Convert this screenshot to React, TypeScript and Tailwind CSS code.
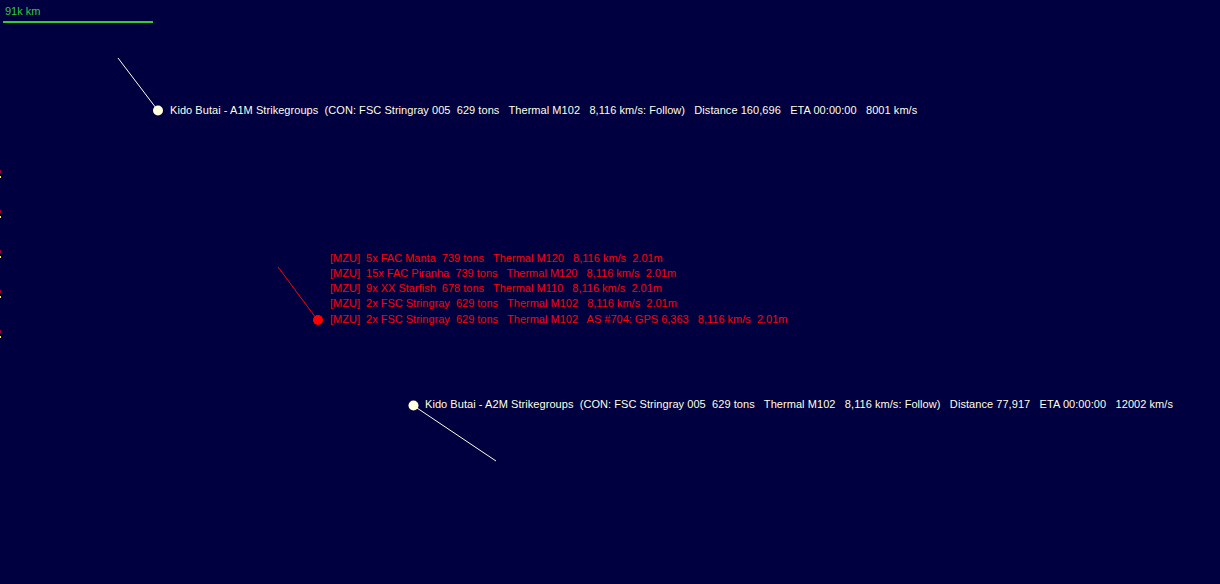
const font = "font-['Liberation_Sans',Arial,sans-serif] text-[11px] leading-[13px] whitespace-pre";

const contacts = [
  '[MZU]  5x FAC Manta  739 tons   Thermal M120   8,116 km/s  2.01m',
  '[MZU]  15x FAC Piranha  739 tons   Thermal M120   8,116 km/s  2.01m',
  '[MZU]  9x XX Starfish  678 tons   Thermal M110   8,116 km/s  2.01m',
  '[MZU]  2x FSC Stringray  629 tons   Thermal M102   8,116 km/s  2.01m',
  '[MZU]  2x FSC Stringray  629 tons   Thermal M102   AS #704: GPS 6,363   8,116 km/s  2.01m',
];

const ticks = [170, 210, 250, 290, 330];

export default function App() {
  return (
    <div className="relative h-[584px] w-[1220px] overflow-hidden bg-[#000040]">
      <svg className="absolute inset-0" width="1220" height="584">
        <line x1="3" y1="22" x2="153" y2="22" stroke="#32cd32" strokeWidth="2" />
        <line x1="118" y1="58" x2="156" y2="108" stroke="#ffffe0" strokeWidth="1" />
        <circle cx="158" cy="110.5" r="5" fill="#ffffe0" />
        <line x1="278" y1="267" x2="316" y2="318" stroke="#ff0000" strokeWidth="1" />
        <circle cx="318" cy="320" r="5" fill="#ff0000" />
        <line x1="414" y1="406" x2="496" y2="461" stroke="#ffffe0" strokeWidth="1" />
        <circle cx="413.5" cy="405.5" r="5" fill="#ffffe0" />
        {ticks.map((y) => (
          <g key={y}>
            <rect x="0" y={y} width="1" height="3" fill="#a00030" />
            <rect x="0" y={y + 6} width="1" height="2" fill="#ffe060" />
          </g>
        ))}
      </svg>

      <div className={`absolute left-[5px] top-[5px] text-[#32cd32] ${font}`}>91k km</div>

      <div className={`absolute left-[170px] top-[104px] tracking-[0.055px] text-[#ffffe0] ${font}`}>
        Kido Butai - A1M Strikegroups  (CON: FSC Stringray 005  629 tons   Thermal M102   8,116 km/s: Follow)   Distance 160,696   ETA 00:00:00   8001 km/s
      </div>

      <div className={`absolute left-[330px] top-[252px] flex flex-col gap-[2px] text-[#ff0000] ${font}`}>
        {contacts.map((c, i) => (
          <div key={i} className={i === 4 ? 'mt-[1px]' : ''}>{c}</div>
        ))}
      </div>

      <div className={`absolute left-[425px] top-[398px] tracking-[0.06px] text-[#ffffe0] ${font}`}>
        Kido Butai - A2M Strikegroups  (CON: FSC Stringray 005  629 tons   Thermal M102   8,116 km/s: Follow)   Distance 77,917   ETA 00:00:00   12002 km/s
      </div>
    </div>
  );
}
